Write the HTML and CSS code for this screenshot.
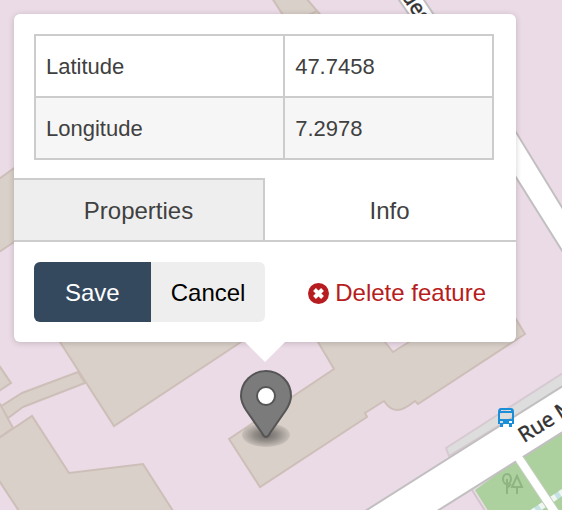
FILE: index.html
```html
<!DOCTYPE html>
<html lang="en">
<head>
<meta charset="utf-8">
<meta name="viewport" content="width=device-width, initial-scale=1">
<title>Map feature</title>
<link rel="stylesheet" href="styles.css">
</head>
<body>
<main class="map">
  <svg class="map-tiles" viewBox="0 0 562 510" preserveAspectRatio="xMinYMin slice" aria-hidden="true">
    <g class="building">
      <path d="M60 342L40 310H290L241 342L114 426Z"/>
      <path d="M78 372L22 393L0 407L8 418L23 407L85 383Z"/>
      <path d="M-4 361L11 383L-4 393Z"/>
      <path d="M-4 400L0 404L13 428L-4 440Z"/>
      <path d="M-4 440L32 416L69 473L143 464L175 514H21L-4 476Z"/>
      <path d="M-4 181L20 164V238L-4 254Z"/>
      <path d="M229 439L260 487L367 417L365 413L384 401Q390 410 397 410Q404 410 415 401L418 404L525 334L508 306L460 310L409 342L393 352L385 342L370 318L300 320L318 342L334 369Z"/>
      <path d="M272 -2L290 26H330L306 -2ZM317 11L307 16"/>
    </g>
    <path class="platform" d="M446 448L566 371V385L449 456Z"/>
    <path class="park" d="M475 490L515 461L562 432H566V514H490Z"/>
    <path class="park-edge" d="M472 490L487 514"/>
    <path class="water" d="M530 514L566 490"/>
    <path class="water-dash" d="M530 514L566 490"/>
    <path class="path-case" d="M514 451L560 520"/>
    <g class="road">
      <path d="M399 0L390 -14H415L424 0L448 36H424Z"/>
      <path d="M500 106L566 214V257L500 152Z"/>
      <path d="M362 513L566 384V430L434 513Z"/>
    </g>
    <path class="path" d="M516 454L560 520"/>
    <g class="street-name">
      <text transform="translate(394 -15) rotate(57)">Rues</text>
      <text transform="translate(524 443) rotate(-32)">Rue M</text>
    </g>
    <path class="bus" fill-rule="evenodd" d="M501 408H511Q514 408 514 412V424H512V427H509V424H503V427H500V424H498V412Q498 408 501 408ZM501 410V411H511V410ZM500 413V419H512V413ZM500 421V423H503V421ZM509 421V423H512V421Z"/>
    <g class="trees">
      <ellipse cx="507" cy="479" rx="4" ry="5"/>
      <path d="M507 479V494M507 488L511 484M517 476L512 487H522ZM517 487V494"/>
    </g>
  </svg>

  <section class="popup" aria-label="Feature">
    <table class="coords">
      <colgroup><col class="coords-name"><col></colgroup>
      <tbody>
        <tr><th scope="row">Latitude</th><td>47.7458</td></tr>
        <tr><th scope="row">Longitude</th><td>7.2978</td></tr>
      </tbody>
    </table>
    <div class="tabs" role="tablist">
      <button class="tab" type="button" role="tab" aria-selected="false">Properties</button>
      <button class="tab tab-active" type="button" role="tab" aria-selected="true">Info</button>
    </div>
    <div class="actions">
      <div class="button-group">
        <button class="button button-save" type="button">Save</button>
        <button class="button button-cancel" type="button">Cancel</button>
      </div>
      <button class="delete" type="button">
        <svg class="delete-icon" viewBox="0 0 21 21" aria-hidden="true">
          <circle cx="10.5" cy="10.5" r="10.5"/>
          <path d="M6.5 6.5L14.5 14.5M14.5 6.5L6.5 14.5"/>
        </svg>
        Delete feature
      </button>
    </div>
  </section>

  <svg class="marker" viewBox="0 0 54 78" aria-hidden="true">
    <defs>
      <radialGradient id="shade">
        <stop offset="0" stop-color="#000" stop-opacity=".5"/>
        <stop offset=".5" stop-color="#000" stop-opacity=".32"/>
        <stop offset="1" stop-color="#000" stop-opacity=".08"/>
      </radialGradient>
    </defs>
    <ellipse cx="27" cy="65" rx="24" ry="12" fill="url(#shade)"/>
    <path class="pin" d="M27 67Q25 67 23 63L7 40Q2 32 2 26A25 25 0 0 1 52 26Q52 32 47 40L31 63Q29 67 27 67Z"/>
    <circle class="pin-hole" cx="27" cy="26" r="9"/>
  </svg>
</main>
</body>
</html>
```
FILE: styles.css
```css
* { box-sizing: border-box; }

body {
  margin: 0;
  color: #404040;
  font-family: "Liberation Sans", Arial, sans-serif;
  font-size: 24px;
}

button {
  margin: 0;
  border: 0;
  padding: 2px 0 0;
  background: none;
  color: inherit;
  font: inherit;
  cursor: pointer;
}

.map {
  position: relative;
  display: flex;
  flex-direction: column;
  align-items: center;
  min-height: 100vh;
  padding: 14px 46px 0 14px;
  overflow: hidden;
  background: #ebdbe6;
}

.map-tiles {
  position: absolute;
  inset: 0;
  width: 100%;
  height: 100%;
}

.building { fill: #d9d0c9; stroke: #cdbfb8; stroke-width: 2; }
.platform { fill: #dddddd; stroke: #d6c9d1; stroke-width: 2; }
.park { fill: #add19e; }
.park-edge { stroke: #d3c5cd; stroke-width: 2; }
.water { stroke: #c5e2e4; stroke-width: 6; }
.water-dash { stroke: #f0f7f2; stroke-width: 6; stroke-dasharray: 7 5; }
.road { fill: #ffffff; stroke: #c2bfc1; stroke-width: 2; }
.path-case { stroke: #c3cdbd; stroke-width: 10; }
.path { stroke: #ffffff; stroke-width: 8; }
.street-name {
  fill: #333333;
  stroke: #333333;
  stroke-width: 0.4;
  font-family: "Noto Sans", sans-serif;
  font-size: 21px;
}
.bus { fill: #1a8fd8; }
.trees { fill: none; stroke: #8fb482; stroke-width: 2; }

.popup {
  position: relative;
  width: 100%;
  padding-top: 20px;
  border-radius: 6px;
  background: #ffffff;
  box-shadow: 0 1px 6px rgba(0, 0, 0, 0.18);
}

.popup::after {
  content: "";
  position: absolute;
  top: 100%;
  left: 50%;
  margin-left: -20px;
  border: 20px solid transparent;
  border-bottom-width: 0;
  border-top-color: #ffffff;
}

.coords {
  width: calc(100% - 42px);
  margin: 0 22px 18px 20px;
  border-collapse: collapse;
  table-layout: fixed;
  font-size: 22px;
}

.coords-name { width: 54.4%; }

.coords th,
.coords td {
  height: 62px;
  border: 2px solid #cccccc;
  padding: 2px 10px 0;
  font-weight: 400;
  text-align: left;
}

.coords tr:nth-child(even) { background: #f6f6f6; }

.tabs {
  display: grid;
  grid-template-columns: 1fr 1fr;
  border-bottom: 2px solid #cccccc;
}

.tab {
  height: 62px;
  border-top: 2px solid #cccccc;
  border-right: 2px solid #cccccc;
  background: #eeeeee;
}

.tab-active {
  border-color: transparent;
  background: none;
}

.actions {
  display: flex;
  align-items: center;
  justify-content: space-between;
  padding: 20px 30px 20px 20px;
}

.button-group {
  display: flex;
  border-radius: 6px;
  overflow: hidden;
}

.button { height: 60px; }
.button-save { padding: 2px 31px 0; background: #34495e; color: #ffffff; }
.button-cancel { padding: 2px 20px 0; background: #eeeeee; color: #000000; }

.delete {
  display: flex;
  align-items: center;
  gap: 6px;
  color: #b71c20;
  white-space: nowrap;
}

.delete-icon { width: 21px; height: 21px; fill: #b71c20; }
.delete-icon path { stroke: #ffffff; stroke-width: 4; }

.marker {
  position: relative;
  width: 54px;
  height: 78px;
  margin: 28px 0 0 2px;
}

.pin { fill: #7b7b7b; stroke: #555555; stroke-width: 2; }
.pin-hole { fill: #ffffff; stroke: #555555; stroke-width: 2; }
```
